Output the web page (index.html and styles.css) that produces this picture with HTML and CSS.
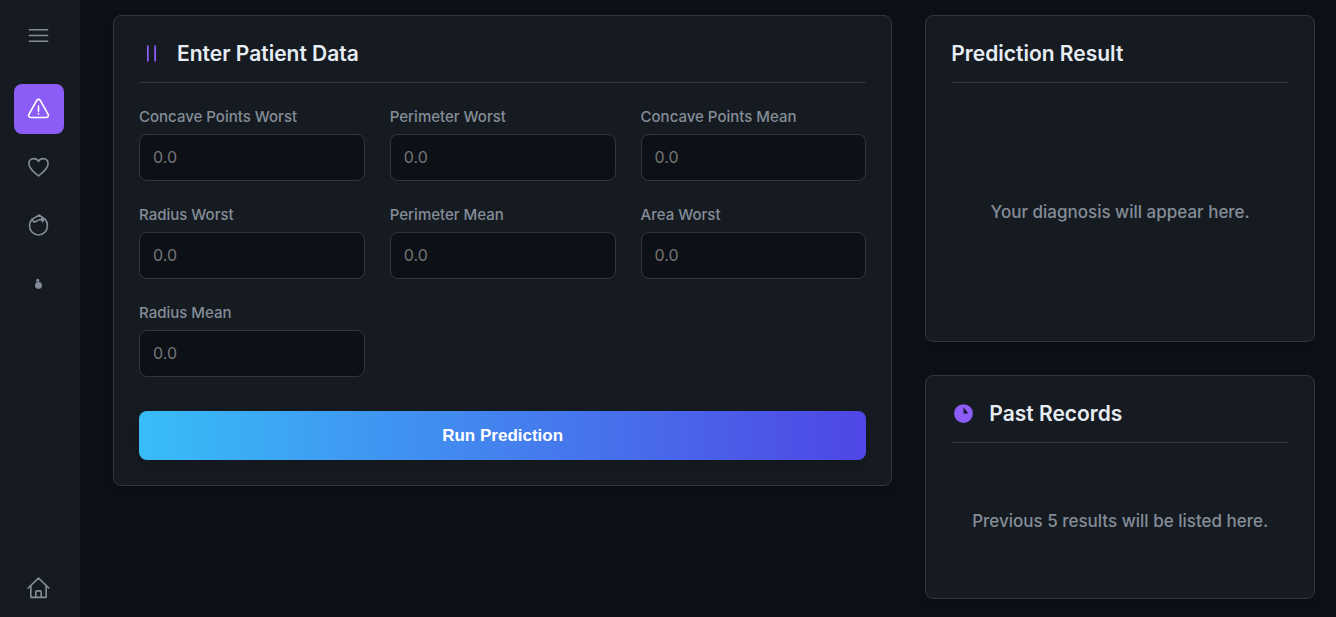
FILE: index.html
```html
<!DOCTYPE html>
<html lang="en">
<head>
<meta charset="utf-8">
<meta name="viewport" content="width=device-width, initial-scale=1">
<title>Patient Prediction</title>
<link rel="stylesheet" href="styles.css">
</head>
<body>
<div class="app">
  <nav class="sidebar" aria-label="Main">
    <button class="nav-item menu-toggle" type="button" aria-label="Toggle menu">
      <svg class="icon" viewBox="0 0 24 24"><path d="M2.5 6h19M2.5 12h19M2.5 18h19"/></svg>
    </button>
    <div class="nav-links">
      <a class="nav-item active" href="#cancer" aria-label="Cancer">
        <svg class="icon" viewBox="0 0 24 24"><path d="M10.200 2.500 1.900 17.200a2.100 2.100 0 0 0 1.800 3.100h16.600a2.100 2.100 0 0 0 1.800-3.100L13.800 2.500a2.100 2.100 0 0 0-3.600 0zM12 8.500v5.300M12 16.300v.4"/></svg>
      </a>
      <a class="nav-item" href="#heart" aria-label="Heart">
        <svg class="icon" viewBox="0 0 24 24"><path d="M22 7.700c0-2.900-2.300-5-5.100-5-2.100 0-4 1.200-4.900 3-.9-1.800-2.800-3-4.900-3C4.300 2.700 2 4.800 2 7.700c0 6.200 7.500 10.800 10 13 2.500-2.200 10-6.800 10-13z"/></svg>
      </a>
      <a class="nav-item" href="#kidney" aria-label="Kidney">
        <svg class="icon" viewBox="0 0 24 24"><path d="M5.200 5.600C3.500 7.300 2.700 9.500 2.700 12.200c0 5.400 4.100 9.700 9.300 9.700s9.300-4.300 9.300-9.700c0-2.700-1-5.300-2.800-7.200l-2.200 2.200"/><path d="M5.200 5.600 12.800 1.100l4.800 3.400-1.500 3.500M5.200 5.600l2.200 2.900 3.400-1.400M11.800 6.300l3-.8M15.600 3.900l-.5 2.600"/></svg>
      </a>
      <a class="nav-item" href="#diabetes" aria-label="Diabetes">
        <svg class="icon solid" viewBox="0 0 24 24"><circle cx="12" cy="14" r="3.600"/><circle cx="11.200" cy="8.800" r="1.700"/></svg>
      </a>
    </div>
    <a class="nav-item home" href="#home" aria-label="Home">
      <svg class="icon" viewBox="0 0 24 24"><path d="M1.200 11.500 12 1.200l10.800 10.300M4 9.200v12h16v-12M9.200 21.200v-5.500a1.200 1.200 0 0 1 1.200-1.200h3.200a1.200 1.200 0 0 1 1.200 1.200v5.500"/></svg>
    </a>
  </nav>

  <main class="content">
    <section class="card">
      <h2 class="card-title">
        <svg class="icon accent" viewBox="0 0 24 24"><path d="M8.500 5v14M15.500 5v14"/></svg>
        Enter Patient Data
      </h2>
      <form class="form">
        <div class="fields">
          <div class="field"><label for="cpw">Concave Points Worst</label><input id="cpw" type="text" inputmode="decimal" placeholder="0.0"></div>
          <div class="field"><label for="pw">Perimeter Worst</label><input id="pw" type="text" inputmode="decimal" placeholder="0.0"></div>
          <div class="field"><label for="cpm">Concave Points Mean</label><input id="cpm" type="text" inputmode="decimal" placeholder="0.0"></div>
          <div class="field"><label for="rw">Radius Worst</label><input id="rw" type="text" inputmode="decimal" placeholder="0.0"></div>
          <div class="field"><label for="pm">Perimeter Mean</label><input id="pm" type="text" inputmode="decimal" placeholder="0.0"></div>
          <div class="field"><label for="aw">Area Worst</label><input id="aw" type="text" inputmode="decimal" placeholder="0.0"></div>
          <div class="field"><label for="rm">Radius Mean</label><input id="rm" type="text" inputmode="decimal" placeholder="0.0"></div>
        </div>
        <button class="submit" type="button">Run Prediction</button>
      </form>
    </section>

    <div class="side">
      <section class="card">
        <h2 class="card-title">Prediction Result</h2>
        <p class="empty tall">Your diagnosis will appear here.</p>
      </section>
      <section class="card">
        <h2 class="card-title">
          <svg class="icon accent solid" viewBox="0 0 24 24"><path fill-rule="evenodd" d="M12 3a9 9 0 1 0 0 18 9 9 0 0 0 0-18zM12 6l4.600 6H12z"/></svg>
          Past Records
        </h2>
        <p class="empty">Previous 5 results will be listed here.</p>
      </section>
    </div>
  </main>
</div>
</body>
</html>
```
FILE: styles.css
```css
:root {
  --bg: #0d1117;
  --panel: #161b22;
  --line: #30363d;
  --text: #e6edf3;
  --muted: #848d97;
  --accent: #8b5cf6;
}

* {
  box-sizing: border-box;
}

body {
  margin: 0;
  background: var(--bg);
  color: var(--text);
  font-family: Inter, "Liberation Sans", sans-serif;
}

.app {
  display: flex;
  min-height: 100vh;
}

.sidebar {
  display: flex;
  flex-direction: column;
  align-items: center;
  flex: 0 0 80px;
  padding: 10px 3px 4px 0;
  background: var(--panel);
}

.nav-item {
  display: flex;
  align-items: center;
  justify-content: center;
  width: 50px;
  height: 50px;
  padding: 0;
  border: 0;
  border-radius: 8px;
  background: none;
  color: var(--muted);
}

.nav-item.active {
  background: var(--accent);
  color: #fff;
}

.nav-links {
  display: flex;
  flex-direction: column;
  gap: 8px;
  margin-top: 24px;
}

.home {
  margin-top: auto;
}

.icon {
  width: 23px;
  height: 23px;
  flex: none;
  fill: none;
  stroke: currentColor;
  stroke-width: 1.7;
  stroke-linecap: round;
  stroke-linejoin: round;
}

.icon.accent {
  width: 25px;
  height: 25px;
  color: var(--accent);
}

.icon.solid {
  fill: currentColor;
  stroke: none;
}

.content {
  display: grid;
  grid-template-columns: minmax(0, 2fr) minmax(0, 1fr);
  align-items: start;
  gap: 33px;
  flex: 1;
  padding: 15px 21px 18px 33px;
}

.side {
  display: grid;
  gap: 33px;
}

.card {
  padding: 25px;
  border: 1px solid var(--line);
  border-radius: 8px;
  background: var(--panel);
  box-shadow: 0 4px 12px rgba(0, 0, 0, 0.15);
}

.card-title {
  display: flex;
  align-items: center;
  gap: 13px;
  margin: 0 0 25px;
  padding-bottom: 16px;
  border-bottom: 1px solid var(--line);
  font-size: 21px;
  font-weight: 600;
  line-height: 25px;
}

.fields {
  display: grid;
  grid-template-columns: repeat(3, minmax(0, 1fr));
  gap: 25px;
}

.field {
  display: flex;
  flex-direction: column;
  gap: 8px;
}

.field label {
  color: var(--muted);
  font-size: 15px;
  font-weight: 500;
  line-height: 18px;
}

.field input {
  width: 100%;
  height: 47px;
  padding: 0 13px 1px;
  border: 1px solid var(--line);
  border-radius: 8px;
  background: var(--bg);
  color: var(--text);
  font: 16px Inter, "Liberation Sans", sans-serif;
}

.field input::placeholder {
  color: #757575;
}

.submit {
  width: 100%;
  height: 49px;
  margin-top: 34px;
  border: 0;
  border-radius: 8px;
  background: linear-gradient(90deg, #38bdf8, #4f46e5);
  box-shadow: 0 4px 12px rgba(0, 0, 0, 0.15);
  color: #fff;
  font: bold 17px "Liberation Sans", Arial, sans-serif;
}

.empty {
  display: flex;
  align-items: center;
  justify-content: center;
  min-height: 105px;
  margin: 0;
  color: var(--muted);
  font-size: 17px;
  font-weight: 500;
  text-align: center;
}

.empty.tall {
  min-height: 208px;
}
```
